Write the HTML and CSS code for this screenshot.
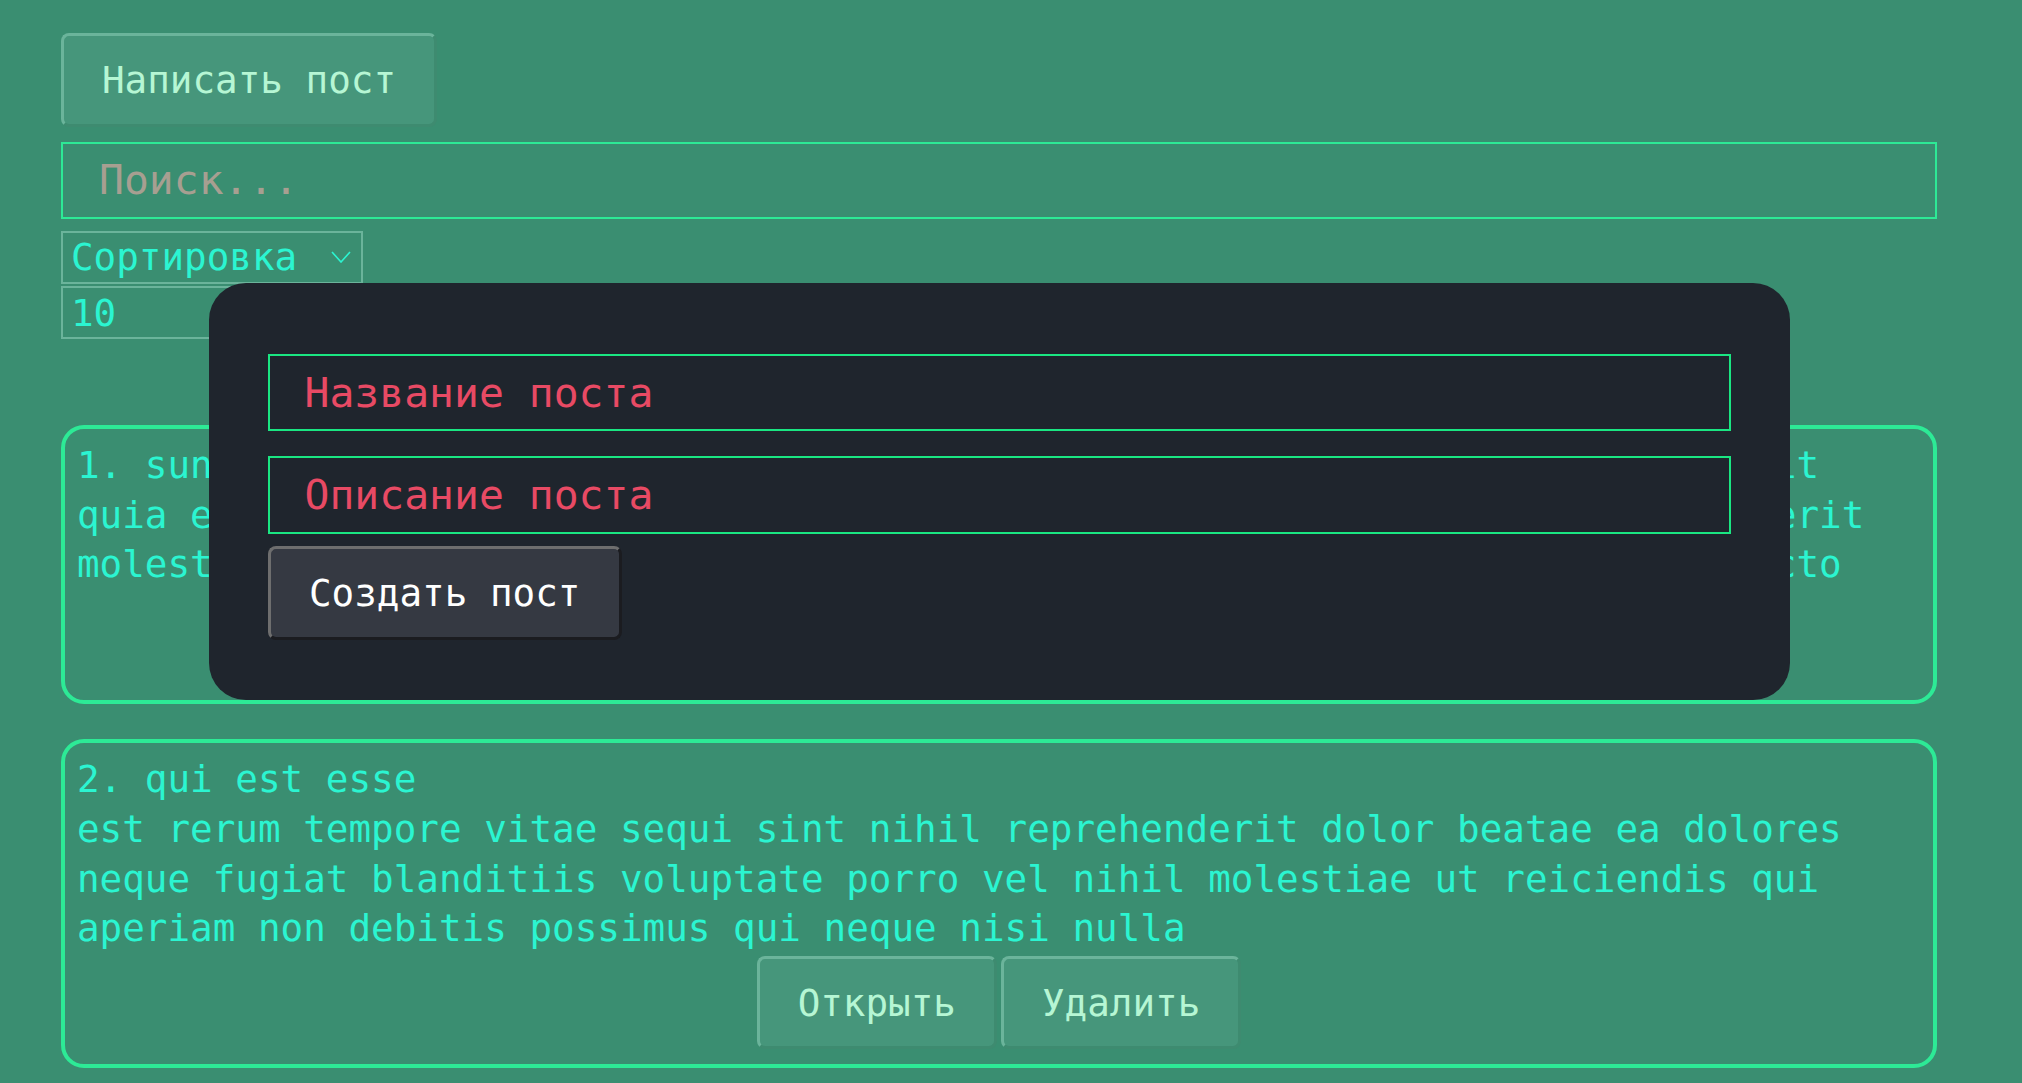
FILE: index.html
```html
<!DOCTYPE html>
<html lang="ru">
<head>
<meta charset="utf-8">
<title>Посты</title>
<link rel="stylesheet" href="styles.css">
</head>
<body>
<div class="app">
  <button class="btn" type="button">Написать пост</button>
  <input class="input search" type="text" placeholder="Поиск...">
  <div class="select select-sort">
    <span class="select-value">Сортировка</span>
    <svg class="chevron" viewBox="0 0 20 12" width="20" height="12" aria-hidden="true"><polyline points="1,1 10,11 19,1" fill="none" stroke="currentColor" stroke-width="1.6"/></svg>
  </div>
  <div class="select select-limit">
    <span class="select-value">10</span>
    <svg class="chevron" viewBox="0 0 20 12" width="20" height="12" aria-hidden="true"><polyline points="1,1 10,11 19,1" fill="none" stroke="currentColor" stroke-width="1.6"/></svg>
  </div>

  <div class="posts">
    <div class="post">
      <div class="post-content">
        <div class="post-title">1. sunt aut facere repellat provident occaecati excepturi optio reprehenderit</div>
        <div class="post-body">quia et suscipit
suscipit recusandae consequuntur expedita et cum
reprehenderit molestiae ut ut quas totam
nostrum rerum est autem sunt rem eveniet architecto</div>
      </div>
      <div class="post-btns"><button class="btn" type="button">Открыть</button><button class="btn" type="button">Удалить</button></div>
    </div>
    <div class="post">
      <div class="post-content">
        <div class="post-title">2. qui est esse</div>
        <div class="post-body">est rerum tempore vitae
sequi sint nihil reprehenderit dolor beatae ea dolores neque
fugiat blanditiis voluptate porro vel nihil molestiae ut reiciendis
qui aperiam non debitis possimus qui neque nisi nulla</div>
      </div>
      <div class="post-btns"><button class="btn" type="button">Открыть</button><button class="btn" type="button">Удалить</button></div>
    </div>
  </div>

  <div class="modal">
    <form class="modal-form">
      <input class="input modal-input" type="text" placeholder="Название поста">
      <input class="input modal-input" type="text" placeholder="Описание поста">
      <button class="btn btn-dark" type="button">Создать пост</button>
    </form>
  </div>
</div>
</body>
</html>
```
FILE: styles.css
```css
* {
  box-sizing: border-box;
}

html,
body {
  margin: 0;
}

body {
  background: #3a8e71;
  font-family: "DejaVu Sans Mono", monospace;
  font-size: 37.6px;
  color: #2bf5d1;
}

.app {
  position: relative;
  width: 1876px;
  margin-left: 61px;
  padding-top: 33px;
  padding-bottom: 40px;
}

.btn {
  font-family: "DejaVu Sans Mono", monospace;
  font-size: 37.6px;
  line-height: normal;
  height: 93.5px;
  padding: 0 38px;
  border: 3px solid;
  border-color: #6bb49b #3e8b70 #3e8b70 #6bb49b;
  border-radius: 8px;
  background: #46967b;
  color: #b6f6d4;
  cursor: pointer;
}

.input {
  display: block;
  font-family: "DejaVu Sans Mono", monospace;
  font-size: 41.4px;
  height: 77.6px;
  width: 100%;
  padding: 0 34.5px;
  border: 2px solid #2dea96;
  background: transparent;
  color: #2bf5d1;
  outline: none;
}

.search {
  margin-top: 15px;
  padding-left: 36px;
}

.search::placeholder {
  color: #a79f91;
}

.select {
  display: flex;
  align-items: center;
  justify-content: space-between;
  height: 53px;
  border: 2px solid #6bb49b;
  padding: 0 10px 0 8px;
  color: #2bf5d1;
}

.select-sort {
  width: 302px;
  margin-top: 11.5px;
}

.select-limit {
  width: 220px;
  margin-top: 2.5px;
}

.chevron {
  display: block;
  flex: none;
}

.posts {
  margin-top: 85.5px;
}

.post {
  border: 4px solid #2dea96;
  border-radius: 23px;
  padding: 12.5px 12px;
  margin-bottom: 35px;
}

.post-content {
  line-height: 49.6px;
}

.post-btns {
  display: flex;
  justify-content: center;
  gap: 4px;
  margin: 2px 0;
}

.modal {
  position: absolute;
  top: 283.3px;
  left: 148px;
  width: 1581px;
  background: #1f252d;
  border-radius: 37px;
  padding: 58px 59px 60px;
}

.modal-form {
  display: flex;
  flex-direction: column;
  align-items: flex-start;
  margin: 0;
}

.modal-input {
  margin: 12.5px 0;
  border-color: #1ae682;
}

.modal-input::placeholder {
  color: #e84a64;
}

.btn-dark {
  background: #353942;
  color: #ffffff;
  border-color: #6e6e6e #1b1c20 #1b1c20 #6e6e6e;
}
```
